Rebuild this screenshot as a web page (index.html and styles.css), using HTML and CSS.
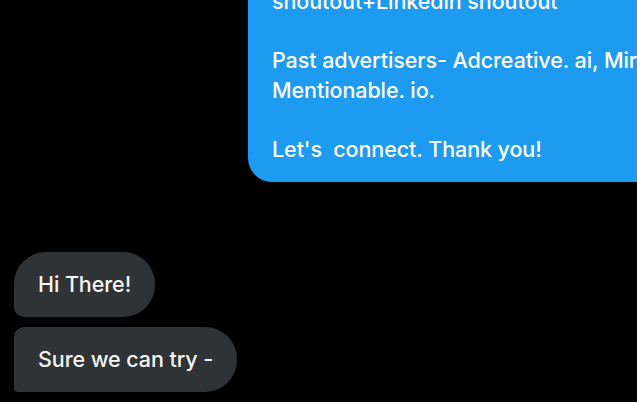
FILE: index.html
```html
<!DOCTYPE html>
<html lang="en">
<head>
<meta charset="utf-8">
<title>Messages</title>
<link rel="stylesheet" href="styles.css">
</head>
<body>
<main class="chat">
  <div class="msg-row sent">
    <div class="bubble blue">shoutout+Linkedin shoutout

Past advertisers- Adcreative. ai, Mirror
Mentionable. io.

Let's  connect. Thank you!</div>
  </div>
  <div class="group received">
    <div class="bubble gray first">Hi There!</div>
    <div class="bubble gray last">Sure we can try -</div>
  </div>
</main>
</body>
</html>
```
FILE: styles.css
```css
html, body {
  margin: 0;
  padding: 0;
  background: #000;
  overflow: hidden;
  width: 637px;
  height: 402px;
}
body {
  font-family: Inter, "Noto Sans", sans-serif;
  font-size: 21.5px;
  line-height: 29.5px;
  font-weight: 500;
  letter-spacing: -0.08px;
}
.chat {
  margin-top: -30.5px;
  display: flex;
  flex-direction: column;
  width: 637px;
}
.msg-row.sent {
  padding-left: 248px;
}
.bubble {
  box-sizing: border-box;
  padding: 17.75px 24px;
  white-space: pre;
}
.blue {
  background: #1d9bf0;
  color: #fff;
  width: 520px;
  border-radius: 24px 24px 4px 24px;
}
.group.received {
  margin-top: 70px;
  padding-left: 14px;
  display: flex;
  flex-direction: column;
  align-items: flex-start;
  gap: 10px;
}
.gray {
  background: #2f3336;
  color: #f4f5f5;
}
.gray.first {
  border-radius: 32px 32px 32px 10px;
}
.gray.last {
  border-radius: 10px 32px 32px 4px;
}
```
